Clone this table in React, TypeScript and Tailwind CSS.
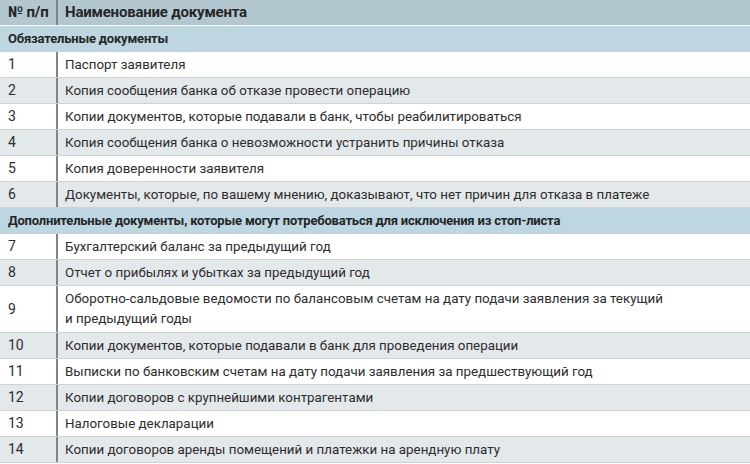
import React from "react";

type Row = { n?: string; text: React.ReactNode; section?: boolean; tall?: boolean };

const rows: Row[] = [
  { text: "Обязательные документы", section: true },
  { n: "1", text: "Паспорт заявителя" },
  { n: "2", text: "Копия сообщения банка об отказе провести операцию" },
  { n: "3", text: "Копии документов, которые подавали в банк, чтобы реабилитироваться" },
  { n: "4", text: "Копия сообщения банка о невозможности устранить причины отказа" },
  { n: "5", text: "Копия доверенности заявителя" },
  { n: "6", text: "Документы, которые, по вашему мнению, доказывают, что нет причин для отказа в платеже" },
  { text: "Дополнительные документы, которые могут потребоваться для исключения из стоп-листа", section: true },
  { n: "7", text: "Бухгалтерский баланс за предыдущий год" },
  { n: "8", text: "Отчет о прибылях и убытках за предыдущий год" },
  {
    n: "9",
    text: (
      <>
        Оборотно-сальдовые ведомости по балансовым счетам на дату подачи заявления за текущий
        <br />и предыдущий годы
      </>
    ),
    tall: true,
  },
  { n: "10", text: "Копии документов, которые подавали в банк для проведения операции" },
  { n: "11", text: "Выписки по банковским счетам на дату подачи заявления за предшествующий год" },
  { n: "12", text: "Копии договоров с крупнейшими контрагентами" },
  { n: "13", text: "Налоговые декларации" },
  { n: "14", text: "Копии договоров аренды помещений и платежки на арендную плату" },
];

export default function App() {
  let stripe = 0;
  return (
    <div className="w-[750px] h-[464px] overflow-hidden bg-white text-[#2d2d2d] font-['Roboto',sans-serif] text-[13.35px]">
      <div className="flex h-[26px] bg-[#b3c7d1] border-b border-white font-bold text-[15px] tracking-[-0.2px] text-[#262626]">
        <div className="w-[58px] pl-2 flex items-center border-r-2 border-[#7d848b]">№ п/п</div>
        <div className="flex-1 pl-[7px] flex items-center">Наименование документа</div>
      </div>
      {rows.map((r, i) => {
        if (r.section) {
          stripe = 0;
          return (
            <div
              key={i}
              className="flex items-center h-[26px] pl-2 bg-[#bdd6e1] border-b border-[#c9cfd3] font-bold text-[13px] tracking-[-0.2px] text-[#262626]"
            >
              {r.text}
            </div>
          );
        }
        const gray = stripe++ % 2 === 1;
        return (
          <div
            key={i}
            className={`flex border-b border-[#cdd2d6] ${r.tall ? "h-[47px]" : "h-[26px]"} ${gray ? "bg-[#e3e8eb]" : "bg-white"}`}
          >
            <div className="w-[58px] pl-2 flex items-center border-r-2 border-[#7d848b] text-[14px]">{r.n}</div>
            <div className="flex-1 pl-[7px] flex items-center whitespace-nowrap leading-[20px]">{r.text}</div>
          </div>
        );
      })}
    </div>
  );
}
